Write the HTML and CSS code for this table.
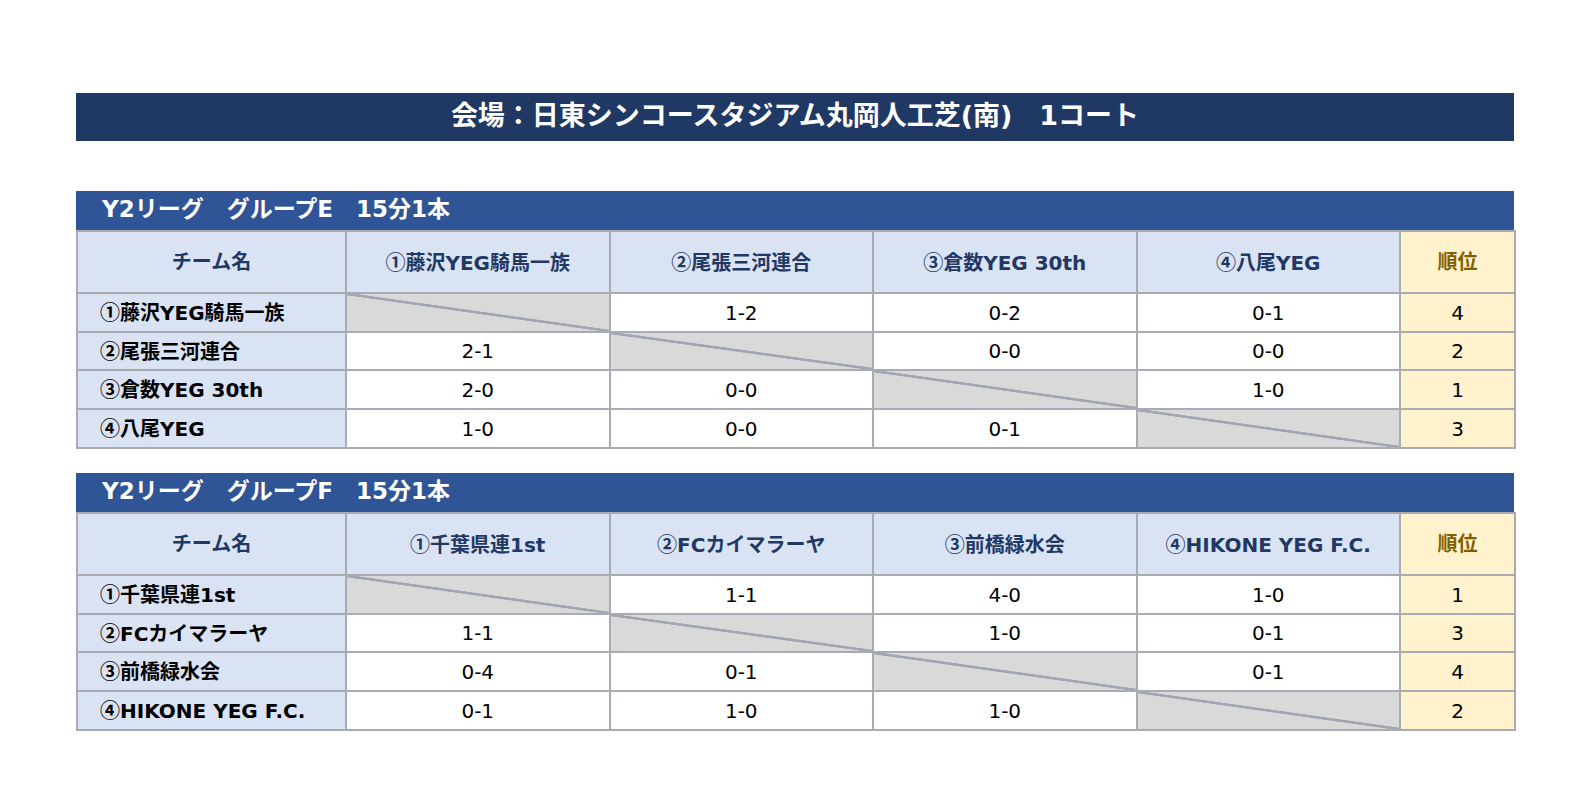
FILE: index.html
```html
<!DOCTYPE html>
<html lang="ja">
<head>
<meta charset="utf-8">
<title>Y2リーグ 1コート</title>
<link rel="stylesheet" href="styles.css">
</head>
<body>
<div class="page">
  <div class="title">会場：日東シンコースタジアム丸岡人工芝(南)　1コート</div>

  <section class="group">
    <div class="group-head">Y2リーグ　グループE　15分1本</div>
    <table class="league">
      <colgroup>
        <col class="c-team"><col class="c-opp"><col class="c-opp"><col class="c-opp"><col class="c-opp"><col class="c-rank">
      </colgroup>
      <thead>
        <tr>
          <th class="hd">チーム名</th>
          <th class="hd"><span class="cn">①</span>藤沢YEG騎馬一族</th>
          <th class="hd"><span class="cn">②</span>尾張三河連合</th>
          <th class="hd"><span class="cn">③</span>倉数YEG 30th</th>
          <th class="hd"><span class="cn">④</span>八尾YEG</th>
          <th class="rank-hd">順位</th>
        </tr>
      </thead>
      <tbody>
        <tr><th class="team"><span class="cn">①</span>藤沢YEG騎馬一族</th><td class="self"></td><td>1-2</td><td>0-2</td><td>0-1</td><td class="rank">4</td></tr>
        <tr><th class="team"><span class="cn">②</span>尾張三河連合</th><td>2-1</td><td class="self"></td><td>0-0</td><td>0-0</td><td class="rank">2</td></tr>
        <tr><th class="team"><span class="cn">③</span>倉数YEG 30th</th><td>2-0</td><td>0-0</td><td class="self"></td><td>1-0</td><td class="rank">1</td></tr>
        <tr><th class="team"><span class="cn">④</span>八尾YEG</th><td>1-0</td><td>0-0</td><td>0-1</td><td class="self"></td><td class="rank">3</td></tr>
      </tbody>
    </table>
  </section>

  <section class="group group-f">
    <div class="group-head">Y2リーグ　グループF　15分1本</div>
    <table class="league">
      <colgroup>
        <col class="c-team"><col class="c-opp"><col class="c-opp"><col class="c-opp"><col class="c-opp"><col class="c-rank">
      </colgroup>
      <thead>
        <tr>
          <th class="hd">チーム名</th>
          <th class="hd"><span class="cn">①</span>千葉県連1st</th>
          <th class="hd"><span class="cn">②</span>FCカイマラーヤ</th>
          <th class="hd"><span class="cn">③</span>前橋緑水会</th>
          <th class="hd"><span class="cn">④</span>HIKONE YEG F.C.</th>
          <th class="rank-hd">順位</th>
        </tr>
      </thead>
      <tbody>
        <tr><th class="team"><span class="cn">①</span>千葉県連1st</th><td class="self"></td><td>1-1</td><td>4-0</td><td>1-0</td><td class="rank">1</td></tr>
        <tr><th class="team"><span class="cn">②</span>FCカイマラーヤ</th><td>1-1</td><td class="self"></td><td>1-0</td><td>0-1</td><td class="rank">3</td></tr>
        <tr><th class="team"><span class="cn">③</span>前橋緑水会</th><td>0-4</td><td>0-1</td><td class="self"></td><td>0-1</td><td class="rank">4</td></tr>
        <tr><th class="team"><span class="cn">④</span>HIKONE YEG F.C.</th><td>0-1</td><td>1-0</td><td>1-0</td><td class="self"></td><td class="rank">2</td></tr>
      </tbody>
    </table>
  </section>
</div>
</body>
</html>
```

FILE: styles.css
```css
* { box-sizing: border-box; }

html, body {
  margin: 0;
  padding: 0;
  background: #ffffff;
}

body {
  font-family: "DejaVu Sans", "Noto Sans CJK JP", sans-serif;
  color: #000;
}

.cn {
  font-family: "Noto Sans CJK JP", sans-serif;
}

.page {
  width: 1438px;
  margin-left: 76px;
  padding-top: 93px;
}

.title {
  height: 48px;
  background: #203864;
  color: #ffffff;
  font-weight: bold;
  font-size: 27px;
  line-height: 1;
  display: flex;
  align-items: center;
  justify-content: center;
  padding-bottom: 3px;
}

.group {
  margin-top: 50px;
}

.group-f {
  margin-top: 24px;
}

.group-head {
  height: 39px;
  background: #2f5597;
  color: #ffffff;
  font-weight: bold;
  font-size: 23px;
  line-height: 1;
  display: flex;
  align-items: center;
  padding-left: 26px;
  padding-bottom: 2px;
}

.league {
  width: 1438px;
  table-layout: fixed;
  border-collapse: collapse;
  font-size: 20px;
  line-height: 1.2;
}

.c-team { width: 269px; }
.c-opp { width: 263.5px; }
.c-rank { width: 115px; }

.league th,
.league td {
  border: 2px solid #a8abb2;
  padding: 0;
  text-align: center;
  vertical-align: middle;
  white-space: nowrap;
}

.league thead tr { height: 62px; }
.league tbody tr { height: 39px; }
.league tbody tr:nth-child(2) { height: 38px; }

.hd {
  background: #dae3f3;
  color: #1f3864;
  font-weight: bold;
}

.rank-hd {
  background: #fff2cc;
  color: #7f6000;
  font-weight: bold;
}

.team {
  background: #dae3f3;
  text-align: left !important;
  padding-left: 22px !important;
  font-weight: bold;
  color: #000;
}

.league td {
  background: #ffffff;
  font-weight: normal;
}

.league td.rank {
  background: #fff2cc;
}

.league td.self {
  background: linear-gradient(to top right,
    #d9d9d9 calc(50% - 1.6px),
    #a2a6b0 calc(50% - 1px),
    #a2a6b0 calc(50% + 1px),
    #d9d9d9 calc(50% + 1.6px));
}
```
